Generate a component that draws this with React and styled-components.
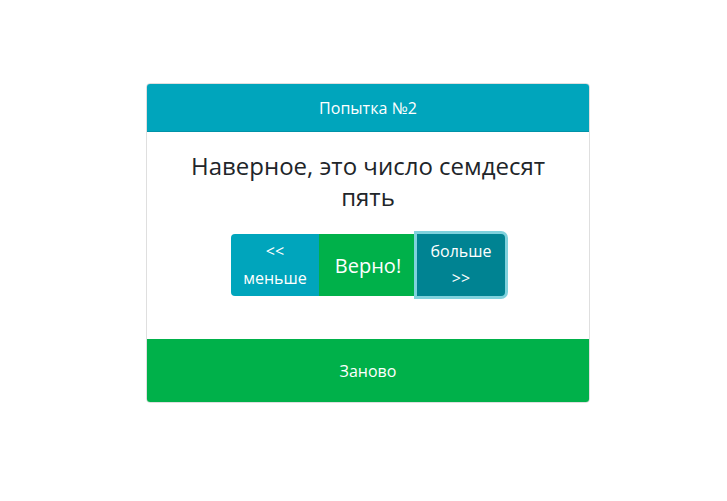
import React from 'react';
import styled, { createGlobalStyle } from 'styled-components';

const GlobalStyle = createGlobalStyle`
  html, body {
    margin: 0;
    padding: 0;
    background: #fff;
    font-family: "Open Sans", "Noto Sans", sans-serif;
  }
`;

const Page = styled.div`
  padding: 83px 0 0 146px;
`;

const Card = styled.div`
  width: 444px;
  box-sizing: border-box;
  border: 1px solid rgba(0, 0, 0, 0.125);
  border-radius: 4px;
  overflow: hidden;
  display: flex;
  flex-direction: column;
`;

const Header = styled.div`
  height: 48px;
  box-sizing: border-box;
  background: #00a5bc;
  border-bottom: 1px solid #0093a8;
  color: #fff;
  font-size: 16px;
  display: flex;
  align-items: center;
  justify-content: center;
`;

const Body = styled.div`
  height: 207px;
  box-sizing: border-box;
  padding: 18px 20px 0;
  display: flex;
  flex-direction: column;
  align-items: center;
`;

const Title = styled.h4`
  margin: 0 0 22px;
  font-size: 24px;
  font-weight: 400;
  line-height: 31px;
  color: #212529;
  text-align: center;
`;

const Group = styled.div`
  display: flex;
`;

const Button = styled.button`
  position: relative;
  width: ${(p) => p.$w}px;
  height: 62px;
  border: none;
  margin: 0;
  padding: 0 4px;
  color: #fff;
  font-family: inherit;
  font-size: ${(p) => (p.$big ? 20 : 16)}px;
  line-height: 27px;
  background: ${(p) => p.$bg};
  box-shadow: ${(p) => (p.$focus ? '0 0 0 3px #7fd2dd' : 'none')};
  z-index: ${(p) => (p.$focus ? 1 : 0)};
  border-radius: ${(p) => p.$radius};
  cursor: pointer;
`;

const Footer = styled.div`
  height: 63px;
  background: #00b14a;
  color: #fff;
  font-size: 16px;
  display: flex;
  align-items: center;
  justify-content: center;
`;

export default function App() {
  return (
    <>
      <GlobalStyle />
      <Page>
        <Card>
          <Header>Попытка №2</Header>
          <Body>
            <Title>Наверное, это число семдесят пять</Title>
            <Group>
              <Button $w={88} $bg="#00a5bc" $radius="4px 0 0 4px">
                &lt;&lt;<br />меньше
              </Button>
              <Button $w={98} $bg="#00b14a" $big $radius="0">
                Верно!
              </Button>
              <Button $w={88} $bg="#008392" $focus $radius="0 4px 4px 0">
                больше<br />&gt;&gt;
              </Button>
            </Group>
          </Body>
          <Footer>Заново</Footer>
        </Card>
      </Page>
    </>
  );
}
